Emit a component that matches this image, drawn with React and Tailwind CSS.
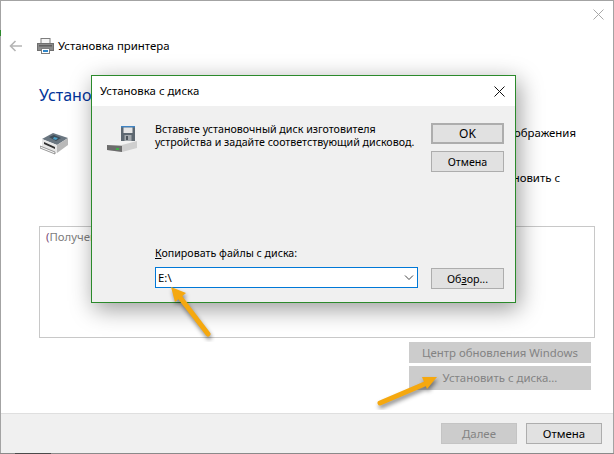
import React from 'react';

const font = { fontFamily: '"Noto Sans", "Open Sans", sans-serif' };

const PrinterSmall = () => (
  <svg width="17" height="16" viewBox="0 0 17 16">
    <rect x="4" y="0.5" width="9" height="5" fill="#f4f4f4" stroke="#7d7d7d" />
    <rect x="0.5" y="5.5" width="16" height="7" fill="#8b8b8b" stroke="#6f6f6f" />
    <rect x="2" y="7" width="13" height="1.5" fill="#5f5f5f" />
    <rect x="4.5" y="10.5" width="8" height="5" fill="#fff" stroke="#7d7d7d" />
    <rect x="6" y="12" width="5" height="2" fill="#2f86c9" />
  </svg>
);

const PrinterLarge = () => (
  <svg width="29" height="23" viewBox="0 0 29 23">
    <path d="M2 7 L13 1 L28 6 L17 13 Z" fill="#6a7680" />
    <path d="M9 5 L14 3 L21 6 L16 9 Z" fill="#3d4c57" />
    <path d="M14 5 L18 6 L16 8 L13 7 Z" fill="#4aa0c8" />
    <path d="M2 7 L17 13 L17 21 L2 15 Z" fill="#e6e6e6" />
    <path d="M17 13 L28 6 L28 13 L17 21 Z" fill="#b9b9b9" />
    <path d="M0 14 L15 20 L15 22 L0 16 Z" fill="#fafafa" stroke="#555" strokeWidth="0.6" />
    <path d="M4 10 L15 15 L15 17 L4 12 Z" fill="#2f2f2f" />
  </svg>
);

const DiskIcon = () => (
  <svg width="30" height="27" viewBox="0 0 30 27">
    <rect x="14" y="0" width="14" height="15" fill="#5d6770" />
    <rect x="14" y="0" width="14" height="1.5" fill="#3f84c4" />
    <rect x="16.5" y="1.5" width="9" height="5.5" fill="#e6e6e6" />
    <rect x="17.5" y="9" width="7" height="6" fill="#a4a9ad" />
    <rect x="19" y="10" width="2" height="4" fill="#4d555c" />
    <path d="M6 15 L28 15 L30 17 L8 19 L0 19 Z" fill="#f2f2f2" />
    <path d="M0 19 L15 19 L30 15 L30 22 L15 26 L0 24 Z" fill="#cfcfcf" />
    <path d="M0 19 L15 20 L15 26 L0 24 Z" fill="#6c6c6c" />
    <rect x="9" y="22" width="3" height="2" fill="#3fae49" />
  </svg>
);

// Orange pointer, drawn over both windows
const Arrow = ({ className, line, head, box }) => (
  <svg className={className} viewBox={box} fill="none">
    <g className="drop-shadow-[1px_3px_2px_rgba(0,0,0,0.45)]">
      <path d={line} stroke="#f5a80f" strokeWidth="5" strokeLinecap="round" />
      <path d={head} fill="#f5a80f" />
    </g>
  </svg>
);

const Btn = ({ children, className = '' }) => (
  <div className={`flex items-center justify-center border border-[#adadad] bg-[#e1e1e1] text-black ${className}`}>
    {children}
  </div>
);

const Disabled = ({ children, className = '' }) => (
  <div className={`flex items-center justify-center bg-[#cccccc] text-[#838383] ${className}`}>
    {children}
  </div>
);

export default function App() {
  return (
    <div style={font} className="relative h-[454px] w-[614px] overflow-hidden bg-white text-[11.4px] leading-[16px] text-black">
      <div className="flex h-[453px] flex-col border-t border-l border-r border-[#a3a3a3]">
        {/* close */}
        <div className="flex h-[29px] justify-end pr-[9px] pt-[8px]">
          <svg width="11" height="11" viewBox="0 0 11 11" stroke="#a8a8a8" fill="none">
            <path d="M0.5 0.5 L10.5 10.5 M10.5 0.5 L0.5 10.5" />
          </svg>
        </div>

        {/* wizard header */}
        <div className="flex h-[32px] items-center">
          <svg className="ml-[8px]" width="13" height="12" viewBox="0 0 13 12" stroke="#b5b5b5" strokeWidth="1.6" fill="none">
            <path d="M13 6 H1.5 M6.5 1 L1.5 6 L6.5 11" />
          </svg>
          <div className="ml-[15px]"><PrinterSmall /></div>
          <span className="ml-[4px] whitespace-nowrap">Установка принтера</span>
        </div>

        <div className="ml-[38px] mt-[22px] text-[16px] leading-[22px] text-[#003399]">Установ</div>

        <div className="mt-[20px] flex h-[100px]">
          <div className="ml-[39px] mt-[6px]"><PrinterLarge /></div>
          <div className="ml-auto mr-[37px] flex flex-col items-end whitespace-nowrap">
            <span className="-mt-px leading-[16px]">изображения</span>
            <span className="mt-[29px] mr-[16px] leading-[16px]">установить с</span>
          </div>
        </div>

        {/* driver list */}
        <div className="ml-[38px] mr-[18px] h-[112px] border border-[#c8c8c8] pl-[6px] pt-[2px] text-[#7d7d7d]">
          <span className="text-[#7a4a78]">(</span>Получение списка
        </div>

        <div className="ml-[408px] mt-[4px] flex w-[182px] flex-col gap-[3px]">
          <Disabled className="h-[21px]">Центр обновления Windows</Disabled>
          <Disabled className="h-[24px]">Установить с диска...</Disabled>
        </div>

        {/* footer */}
        <div className="mt-[23px] flex h-[40px] items-start justify-end gap-[9px] border-t border-[#dfdfdf] bg-[#f0f0f0] pr-[11px] pt-[9px]">
          <Disabled className="h-[21px] w-[76px] border border-[#c4c4c4]">Далее</Disabled>
          <Btn className="h-[21px] w-[76px]">Отмена</Btn>
        </div>
      </div>
      <div className="flex h-px bg-[#8a8a8a]">
        <div className="ml-[15px] w-[36px] bg-[#4a4a4a]" />
      </div>
      <div className="absolute left-0 top-[30px] h-[6px] w-px bg-[#2b8a2b]" />

      {/* install from disk dialog */}
      <div className="absolute left-[91px] top-[75px] flex h-[228px] w-[425px] flex-col border border-[#2b8a2b] bg-[#f0f0f0] shadow-[3px_6px_22px_rgba(0,0,0,0.4)]">
        <div className="flex h-[30px] items-center justify-between bg-white pl-[8px] pr-[10px]">
          <span>Установка с диска</span>
          <svg width="11" height="11" viewBox="0 0 11 11" stroke="#111" fill="none">
            <path d="M0.5 0.5 L10.5 10.5 M10.5 0.5 L0.5 10.5" />
          </svg>
        </div>

        <div className="flex pt-[17px]">
          <div className="ml-[15px] mt-[3px]"><DiskIcon /></div>
          <div className="ml-[18px] w-[276px] text-[10.67px] leading-[13px] whitespace-nowrap">
            <div>Вставьте установочный диск изготовителя</div>
            <div>устройства и задайте соответствующий дисковод.</div>
          </div>
          <div className="flex w-[73px] flex-col gap-[7px]">
            <Btn className="h-[21px] border-2 border-[#0078d7] text-[12px]">OK</Btn>
            <Btn className="h-[21px] text-[10.67px]">Отмена</Btn>
          </div>
        </div>

        <div className="ml-[63px] mt-[73px] text-[10.67px]"><u>К</u>опировать файлы с диска:</div>
        <div className="ml-[63px] mt-[6px] flex items-start">
          <div className="flex h-[21px] w-[263px] items-center justify-between border border-[#0078d7] bg-white pl-[2px] pr-[3px]">
            <span>E:\</span>
            <svg width="10" height="6" viewBox="0 0 10 6" stroke="#444" fill="none">
              <path d="M1 0.5 L5 4.5 L9 0.5" />
            </svg>
          </div>
          <Btn className="ml-[13px] mt-px h-[21px] w-[73px] text-[10.67px]"><span>Об<u>з</u>ор...</span></Btn>
        </div>
      </div>

      <Arrow
        className="absolute left-[165px] top-[282px] h-[60px] w-[50px]"
        box="0 0 50 60"
        line="M43 52 L14 14"
        head="M6 5 L21 11 L10 20 Z"
      />
      <Arrow
        className="absolute left-[372px] top-[366px] h-[44px] w-[72px]"
        box="0 0 72 44"
        line="M8 37 L55 17"
        head="M50 11 L65 11 L55 23 Z"
      />
    </div>
  );
}
